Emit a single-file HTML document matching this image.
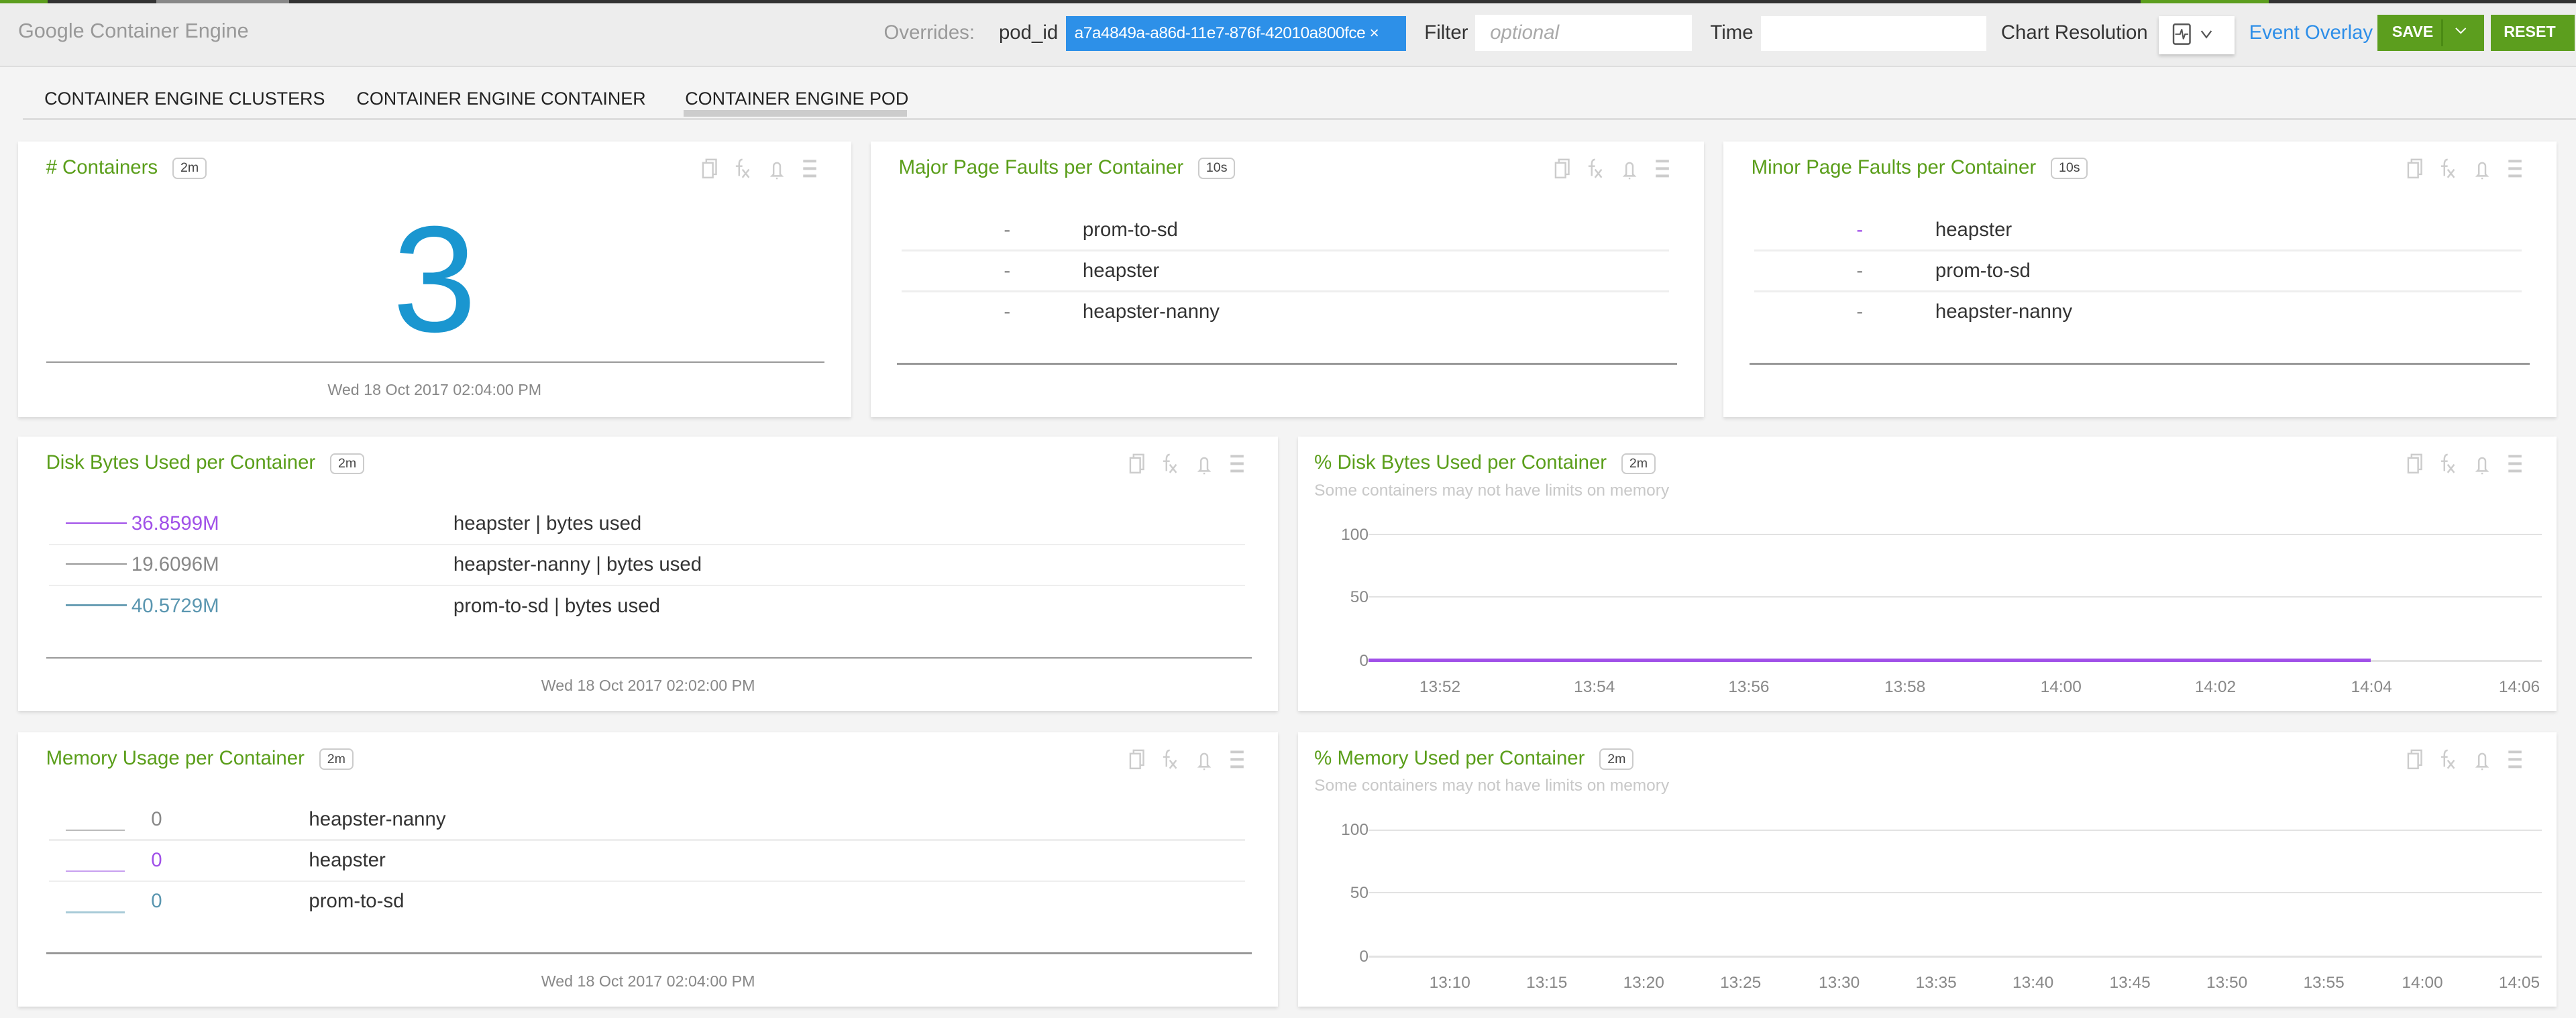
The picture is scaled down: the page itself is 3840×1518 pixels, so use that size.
<!DOCTYPE html>
<html><head><meta charset="utf-8">
<style>
html,body{margin:0;padding:0;background:#f4f4f4;width:3840px;height:1518px;overflow:hidden}
#r{zoom:2.44898;position:relative;width:1568px;height:620px;font-family:"Liberation Sans",sans-serif;background:#f4f4f4}
.a{position:absolute;white-space:nowrap}
.p{position:absolute;background:#fff;box-shadow:0 1px 2px rgba(0,0,0,.12)}
.t{position:absolute;left:17px;top:9px;color:#5a9e1a;font-size:12px}
.b{display:inline-block;margin-left:9px;border:1px solid #ccc;border-radius:3px;font-size:8px;color:#444;padding:1px 4px;vertical-align:1px}
.ic{position:absolute;top:9px;right:12px;width:80px;height:16px}
.row{position:absolute;font-size:12px;color:#333}
.sep{position:absolute;height:1px;background:#eee}
.bl{position:absolute;height:2px;background:#999}
.dt{position:absolute;font-size:9.5px;color:#888;text-align:center}
.g{position:absolute;height:1px;background:#e2e2e2}
.yl{position:absolute;font-size:10px;color:#888;text-align:right;width:30px}
.xl{position:absolute;font-size:10px;color:#888}
.sub{position:absolute;left:10px;top:27px;font-size:10px;color:#c8c8c8}
.rw{top:2px}
</style></head><body><div id="r">
<div class="a" style="left:0;top:0;width:1568px;height:2px;background:#333"></div>
<div class="a" style="left:0;top:0;width:29px;height:2px;background:#5c9e1e"></div>
<div class="a" style="left:95px;top:0;width:81px;height:2px;background:#888"></div>
<div class="a" style="left:1303px;top:0;width:78px;height:2px;background:#5c9e1e"></div>
<div class="a" style="left:0;top:2px;width:1568px;height:38px;background:#ededed;border-bottom:1px solid #ddd"></div>
<div class="a" style="left:11px;top:12px;font-size:12.5px;color:#999">Google Container Engine</div>
<div class="a" style="left:538px;top:13px;font-size:12px;color:#999">Overrides:</div>
<div class="a" style="left:608px;top:13px;font-size:12px;color:#333">pod_id</div>
<div class="a" style="left:649px;top:10px;width:207px;height:21px;background:#2d90e8;color:#fff;font-size:10px;letter-spacing:-0.2px;line-height:21px;padding-left:5px;box-sizing:border-box">a7a4849a-a86d-11e7-876f-42010a800fce ×</div>
<div class="a" style="left:867px;top:13px;font-size:12px;color:#333">Filter</div>
<div class="a" style="left:898px;top:9px;width:132px;height:22px;background:#fff"></div>
<div class="a" style="left:907px;top:13px;font-size:12px;color:#aaa;font-style:italic">optional</div>
<div class="a" style="left:1041px;top:13px;font-size:12px;color:#333">Time</div>
<div class="a" style="left:1072px;top:10px;width:137px;height:21px;background:#fff"></div>
<div class="a" style="left:1218px;top:13px;font-size:12px;color:#333">Chart Resolution</div>
<div class="a" style="left:1314px;top:10px;width:46px;height:23px;background:#fff;box-shadow:0 1px 2px rgba(0,0,0,.2)">
<svg width="46" height="23" style="position:absolute;left:0;top:0"><rect x="9" y="5" width="10" height="12" rx="1" fill="none" stroke="#555" stroke-width="1"/><path d="M10 11h3l1-3 1 6 1-3h2" fill="none" stroke="#555" stroke-width=".8"/><path d="M26 9l3 4 3-4" fill="none" stroke="#555" stroke-width=".9"/></svg></div>
<div class="a" style="left:1369px;top:13px;font-size:12px;color:#2d8ee8">Event Overlay</div>
<div class="a" style="left:1447px;top:9px;width:65px;height:22px;background:#5c9e1e"></div>
<div class="a" style="left:1456px;top:14px;font-size:9.5px;color:#fff;font-weight:bold">SAVE</div>
<div class="a" style="left:1486px;top:12px;width:1px;height:16px;background:#4a8a14"></div>
<svg class="a" style="left:1493px;top:15px" width="10" height="8"><path d="M2 2l3 3 3-3" fill="none" stroke="#fff" stroke-width=".8"/></svg>
<div class="a" style="left:1516px;top:9px;width:51px;height:22px;background:#5c9e1e"></div>
<div class="a" style="left:1524px;top:14px;font-size:9.5px;color:#fff;font-weight:bold">RESET</div>
<div class="a" style="left:27px;top:54px;font-size:11px;color:#222">CONTAINER ENGINE CLUSTERS</div>
<div class="a" style="left:217px;top:54px;font-size:11px;color:#222">CONTAINER ENGINE CONTAINER</div>
<div class="a" style="left:417px;top:54px;font-size:11px;color:#222">CONTAINER ENGINE POD</div>
<div class="a" style="left:14px;top:72px;width:1554px;height:1px;background:#ddd"></div>
<div class="a" style="left:416px;top:67px;width:136px;height:4px;background:#ccc"></div>

<svg width="0" height="0" style="position:absolute"><defs><g id="icons" fill="none" stroke="#ccc" stroke-width="1"><rect x="2" y="4" width="6" height="9"/><path d="M4 4V2h6v9H8"/><path d="M24 12V5q0-3 2-3M22 6h4M26 8l4 5M30 8l-4 5"/><path d="M45 11V6a2 2 0 0 1 4 0v5l1 1h-6zM46.5 13.5h1"/><path d="M63 3h8M63 7.5h8M63 12h8" stroke-width="1.6"/></g></defs></svg>

<div class="p" style="left:11px;top:86px;width:507px;height:168px">
<div class="t"># Containers<span class="b">2m</span></div>
<svg class="ic" viewBox="0 0 80 16"><use href="#icons"/></svg>
<div class="a" style="left:0;width:507px;top:34px;text-align:center;font-size:92px;color:#1a96d0;line-height:100px">3</div>
<div class="bl" style="left:17px;top:134px;width:474px;height:1px"></div>
<div class="dt" style="left:0;width:507px;top:146px">Wed 18 Oct 2017 02:04:00 PM</div>
</div>
<div class="p" style="left:530px;top:86px;width:507px;height:168px">
<div class="t">Major Page Faults per Container<span class="b">10s</span></div>
<svg class="ic" viewBox="0 0 80 16"><use href="#icons"/></svg>
<div class="row" style="left:81px;top:47px;color:#888">-</div><div class="row" style="left:129px;top:47px">prom-to-sd</div>
<div class="sep" style="left:19px;top:66px;width:467px"></div>
<div class="row" style="left:81px;top:72px;color:#888">-</div><div class="row" style="left:129px;top:72px">heapster</div>
<div class="sep" style="left:19px;top:91px;width:467px"></div>
<div class="row" style="left:81px;top:97px;color:#888">-</div><div class="row" style="left:129px;top:97px">heapster-nanny</div>
<div class="bl" style="left:16px;top:135px;width:475px;height:1px"></div>
</div>
<div class="p" style="left:1049px;top:86px;width:507px;height:168px">
<div class="t">Minor Page Faults per Container<span class="b">10s</span></div>
<svg class="ic" viewBox="0 0 80 16"><use href="#icons"/></svg>
<div class="row" style="left:81px;top:47px;color:#a050e8">-</div><div class="row" style="left:129px;top:47px">heapster</div>
<div class="sep" style="left:19px;top:66px;width:467px"></div>
<div class="row" style="left:81px;top:72px;color:#888">-</div><div class="row" style="left:129px;top:72px">prom-to-sd</div>
<div class="sep" style="left:19px;top:91px;width:467px"></div>
<div class="row" style="left:81px;top:97px;color:#888">-</div><div class="row" style="left:129px;top:97px">heapster-nanny</div>
<div class="bl" style="left:16px;top:135px;width:475px;height:1px"></div>
</div>
<div class="p" style="left:11px;top:266px;width:767px;height:167px">
<div class="t">Disk Bytes Used per Container<span class="b">2m</span></div>
<svg class="ic" viewBox="0 0 80 16"><use href="#icons"/></svg>
<div class="a" style="left:29px;top:52px;width:37px;height:1px;background:#a050e8"></div>
<div class="row" style="left:69px;top:46px;color:#a050e8">36.8599M</div><div class="row" style="left:265px;top:46px">heapster | bytes used</div>
<div class="sep" style="left:19px;top:65px;width:728px"></div>
<div class="a" style="left:29px;top:77px;width:37px;height:1px;background:#999"></div>
<div class="row" style="left:69px;top:71px;color:#888">19.6096M</div><div class="row" style="left:265px;top:71px">heapster-nanny | bytes used</div>
<div class="sep" style="left:19px;top:90px;width:728px"></div>
<div class="a" style="left:29px;top:102px;width:37px;height:1px;background:#6a9fb5"></div>
<div class="row" style="left:69px;top:96px;color:#5a96b0">40.5729M</div><div class="row" style="left:265px;top:96px">prom-to-sd | bytes used</div>
<div class="bl" style="left:17px;top:134px;width:734px;height:1px"></div>
<div class="dt" style="left:0;width:767px;top:146px">Wed 18 Oct 2017 02:02:00 PM</div>
</div>
<div class="p" style="left:790px;top:266px;width:766px;height:167px">
<div class="t" style="left:10px">% Disk Bytes Used per Container<span class="b">2m</span></div>
<svg class="ic" viewBox="0 0 80 16"><use href="#icons"/></svg>
<div class="sub">Some containers may not have limits on memory</div>
<div class="g" style="left:43px;top:59px;width:714px"></div>
<div class="g" style="left:43px;top:97px;width:714px"></div>
<div class="g" style="left:43px;top:136px;width:714px"></div>
<div class="a" style="left:43px;top:135px;width:610px;height:2px;background:#a050e8"></div>
<div class="yl" style="left:13px;top:54px">100</div><div class="yl" style="left:13px;top:92px">50</div><div class="yl" style="left:13px;top:131px">0</div>
<div class="xl" style="left:74px;top:147px">13:52</div><div class="xl" style="left:168px;top:147px">13:54</div><div class="xl" style="left:262px;top:147px">13:56</div><div class="xl" style="left:357px;top:147px">13:58</div><div class="xl" style="left:452px;top:147px">14:00</div><div class="xl" style="left:546px;top:147px">14:02</div><div class="xl" style="left:641px;top:147px">14:04</div><div class="xl" style="left:731px;top:147px">14:06</div>
</div>
<div class="p" style="left:11px;top:446px;width:767px;height:167px">
<div class="t">Memory Usage per Container<span class="b">2m</span></div>
<svg class="ic" viewBox="0 0 80 16"><use href="#icons"/></svg>
<div class="a" style="left:29px;top:59px;width:36px;height:1px;background:#bbb"></div>
<div class="row" style="left:81px;top:46px;color:#888">0</div><div class="row" style="left:177px;top:46px">heapster-nanny</div>
<div class="sep" style="left:19px;top:65px;width:728px"></div>
<div class="a" style="left:29px;top:84px;width:36px;height:1px;background:#c8a0f0"></div>
<div class="row" style="left:81px;top:71px;color:#a050e8">0</div><div class="row" style="left:177px;top:71px">heapster</div>
<div class="sep" style="left:19px;top:90px;width:728px"></div>
<div class="a" style="left:29px;top:109px;width:36px;height:1px;background:#a8cbd8"></div>
<div class="row" style="left:81px;top:96px;color:#5a96b0">0</div><div class="row" style="left:177px;top:96px">prom-to-sd</div>
<div class="bl" style="left:17px;top:134px;width:734px;height:1px"></div>
<div class="dt" style="left:0;width:767px;top:146px">Wed 18 Oct 2017 02:04:00 PM</div>
</div>
<div class="p" style="left:790px;top:446px;width:766px;height:167px">
<div class="t" style="left:10px">% Memory Used per Container<span class="b">2m</span></div>
<svg class="ic" viewBox="0 0 80 16"><use href="#icons"/></svg>
<div class="sub">Some containers may not have limits on memory</div>
<div class="g" style="left:43px;top:59px;width:714px"></div>
<div class="g" style="left:43px;top:97px;width:714px"></div>
<div class="g" style="left:43px;top:136px;width:714px"></div>
<div class="yl" style="left:13px;top:54px">100</div><div class="yl" style="left:13px;top:92px">50</div><div class="yl" style="left:13px;top:131px">0</div>
<div class="xl" style="left:80px;top:147px">13:10</div><div class="xl" style="left:139px;top:147px">13:15</div><div class="xl" style="left:198px;top:147px">13:20</div><div class="xl" style="left:257px;top:147px">13:25</div><div class="xl" style="left:317px;top:147px">13:30</div><div class="xl" style="left:376px;top:147px">13:35</div><div class="xl" style="left:435px;top:147px">13:40</div><div class="xl" style="left:494px;top:147px">13:45</div><div class="xl" style="left:553px;top:147px">13:50</div><div class="xl" style="left:612px;top:147px">13:55</div><div class="xl" style="left:672px;top:147px">14:00</div><div class="xl" style="left:731px;top:147px">14:05</div>
</div>
</div></body></html>
